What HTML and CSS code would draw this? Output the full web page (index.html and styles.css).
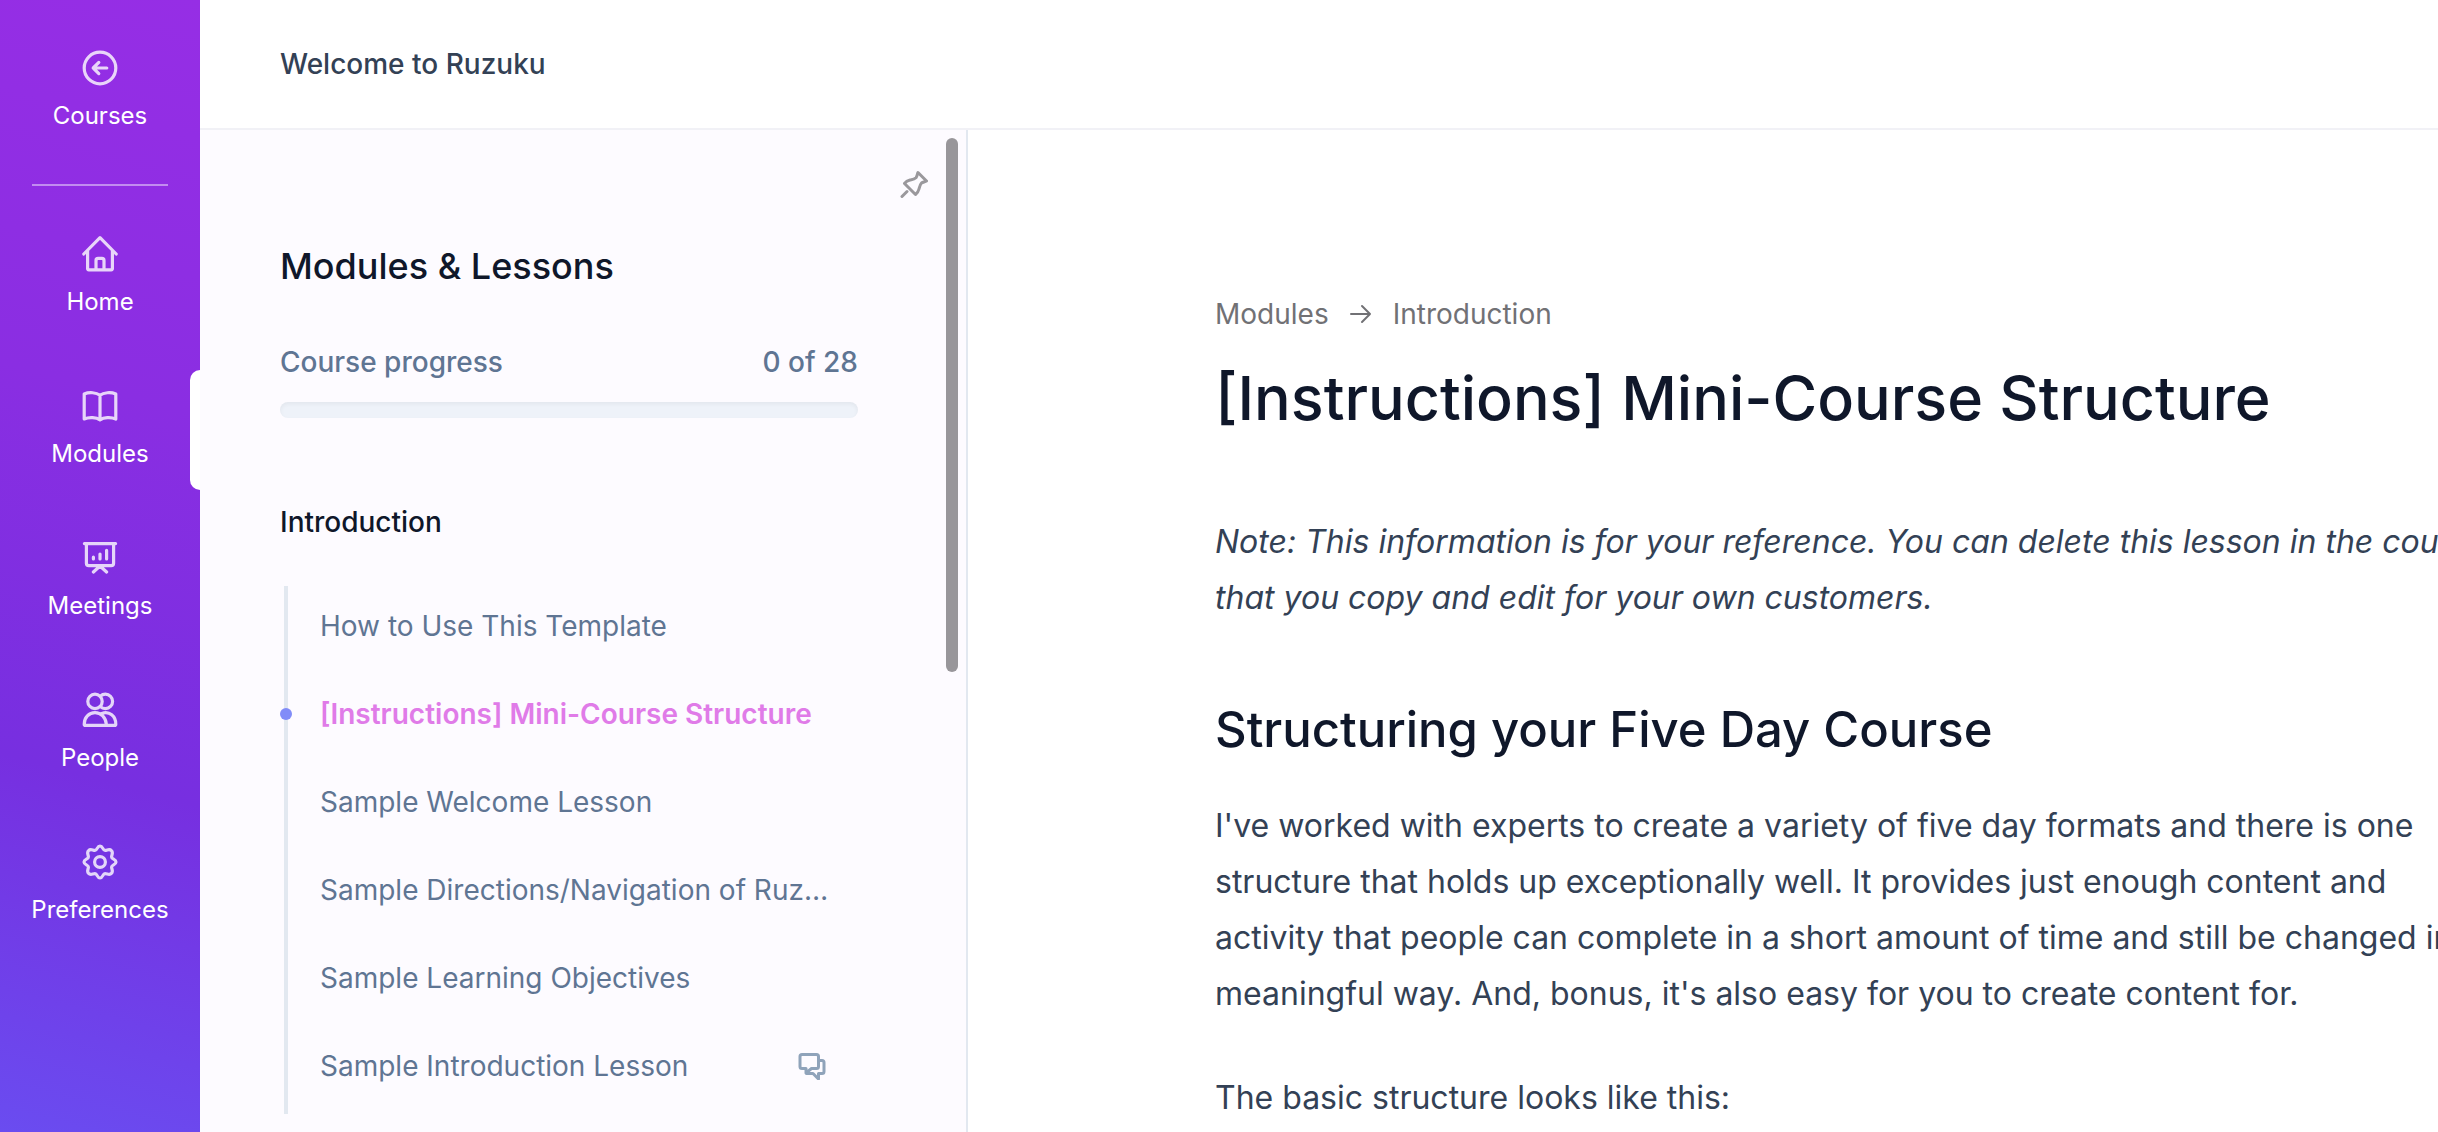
FILE: index.html
```html
<!DOCTYPE html>
<html lang="en">
<head>
    <meta charset="UTF-8">
    <meta name="viewport" content="width=device-width, initial-scale=1.0">
    <title>Welcome to Ruzuku</title>
    <link rel="stylesheet" href="styles.css">
</head>
<body>
    <div class="app">
        <nav class="sidebar">
            <a href="#" class="nav-item">
                <svg class="icon" viewBox="0 0 20 20"><circle cx="10" cy="10" r="7.9"/><path d="M13.4 10H6.6M9.4 7.2L6.6 10l2.8 2.8"/></svg>
                Courses
            </a>
            <hr class="nav-divider">
            <a href="#" class="nav-item">
                <svg class="icon" viewBox="0 0 20 20"><path d="M1.9 10L10 1.8 18.1 10M3.8 8.2v9.1c0 .4.3.6.6.6h11.2c.4 0 .6-.3.6-.6V8.2M8 17.8v-4.6c0-.6.4-1 1-1h2c.6 0 1 .4 1 1v4.6"/></svg>
                Home
            </a>
            <a href="#" class="nav-item active">
                <svg class="icon" viewBox="0 0 20 20"><path d="M10 4.6C8.2 3.2 4.6 2.9 2.1 4v12.5c2.5-1.1 6.1-.8 7.9.4 1.800-1.200 5.400-1.500 7.900-.4V4c-2.500-1.100-6.100-.8-7.900.6zM10 4.600v12.300"/></svg>
                Modules
            </a>
            <a href="#" class="nav-item">
                <svg class="icon" viewBox="0 0 20 20"><path d="M2.2 2.8h15.600M3.200 2.800v9.800c0 .7.500 1.200 1.200 1.200h11.200c.7 0 1.200-.5 1.200-1.200V2.800M10 14l-3.300 3M10 14l3.300 3M6.700 9.600v.9M10 8v2.500M13.300 6.200v4.300"/></svg>
                Meetings
            </a>
            <a href="#" class="nav-item">
                <svg class="icon" viewBox="0 0 20 20"><circle cx="7.5" cy="5.7" r="3.6"/><path d="M10.2 3.100A3.600 3.600 0 1 1 10.200 8.300M2.100 17.100c0-3.400 2.400-5.800 5.400-5.800s5.400 2.400 5.700 5.900c0 .3-.2.500-.5.500H2.700c-.4 0-.6-.2-.6-.6zM10.900 11.700c3.900-1.400 7 1.500 7 5.400 0 .4-.2.600-.6.600h-4.600"/></svg>
                People
            </a>
            <a href="#" class="nav-item">
                <svg class="icon" viewBox="0 0 20 20"><circle cx="10" cy="10" r="2.7"/><path d="M10 2C11.500 2 11.300 4.200 12.500 4.200C13.700 4.200 14.700 3.200 15.700 4.300C16.800 5.300 15.800 6.300 15.800 7.500C15.800 8.700 18 8.500 18 10C18 11.500 15.800 11.300 15.800 12.500C15.800 13.700 16.800 14.700 15.700 15.700C14.700 16.800 13.700 15.800 12.500 15.800C11.300 15.800 11.500 18 10 18C8.500 18 8.700 15.800 7.500 15.800C6.300 15.800 5.300 16.800 4.300 15.700C3.200 14.700 4.200 13.700 4.200 12.500C4.200 11.300 2 11.500 2 10C2 8.500 4.200 8.700 4.200 7.500C4.200 6.300 3.200 5.300 4.300 4.300C5.300 3.200 6.300 4.200 7.500 4.200C8.700 4.200 8.500 2 10 2z"/></svg>
                Preferences
            </a>
        </nav>

        <div class="page">
            <header class="topbar">Welcome to Ruzuku</header>

            <div class="columns">
                <aside class="outline">
                    <button class="pin-btn" aria-label="Pin panel">
                        <svg class="pin-icon" viewBox="0 0 28 28"><path d="M2 26.500l5-5M18 2.500l8.500 8.500c-1.500 1-3.500 1-5 2-1.500 1.500-2 4-2.500 6-.5 2-1.500 4-3.500 5.500L4.500 13.500c1.500-2 3.500-3 5.500-3.500 2-.4 4.500-.8 6-2.300 1.200-1.500 1.200-3.500 2-5.200z"/></svg>
                    </button>

                    <h2 class="outline-title">Modules &amp; Lessons</h2>
                    <div class="progress-label">
                        <span>Course progress</span>
                        <span>0 of 28</span>
                    </div>
                    <div class="progress-bar"></div>

                    <h3 class="module-title">Introduction</h3>
                    <ul class="lessons">
                        <li><a href="#">How to Use This Template</a></li>
                        <li class="current"><a href="#">[Instructions] Mini-Course Structure</a></li>
                        <li><a href="#">Sample Welcome Lesson</a></li>
                        <li><a href="#">Sample Directions/Navigation of Ruzuku</a></li>
                        <li><a href="#">Sample Learning Objectives</a></li>
                        <li>
                            <a href="#">Sample Introduction Lesson</a>
                            <svg class="chat-icon" viewBox="0 0 28 28"><path d="M4 2.500h14.500c1.100 0 2 .9 2 2v10c0 1.100-.9 2-2 2h-5L8 21v-4.500H4c-1.100 0-2-.9-2-2v-10c0-1.100.9-2 2-2zM21 8.500h3c1.100 0 2 .9 2 2v9c0 1.100-.9 2-2 2h-3.500V27L15 21.500H8.500"/></svg>
                        </li>
                    </ul>
                    <div class="scroll-thumb"></div>
                </aside>

                <main class="content">
                    <div class="breadcrumb">
                        <a href="#">Modules</a>
                        <svg class="arrow-icon" viewBox="0 0 24 24"><path d="M2 12h19M13 4l8 8-8 8"/></svg>
                        <a href="#">Introduction</a>
                    </div>
                    <h1>[Instructions] Mini-Course Structure</h1>
                    <p><em>Note: This information is for your reference. You can delete this lesson in the course that you copy and edit for your own customers.</em></p>
                    <h2>Structuring your Five Day Course</h2>
                    <p>I've worked with experts to create a variety of five day formats and there is one structure that holds up exceptionally well. It provides just enough content and activity that people can complete in a short amount of time and still be changed in a meaningful way. And, bonus, it's also easy for you to create content for.</p>
                    <p>The basic structure looks like this:</p>
                </main>
            </div>
        </div>
    </div>
</body>
</html>
```
FILE: styles.css
```css
* {
    margin: 0;
    padding: 0;
    box-sizing: border-box;
}

body {
    font-family: Inter, 'Liberation Sans', sans-serif;
    font-size: 28px;
    line-height: 40px;
    color: #334155;
    background: #fff;
}

a {
    color: inherit;
    text-decoration: none;
}

svg {
    fill: none;
    stroke: currentColor;
    stroke-linecap: round;
    stroke-linejoin: round;
}

.app {
    display: flex;
    height: 100vh;
    overflow: hidden;
}

/* Sidebar */
.sidebar {
    flex: none;
    width: 200px;
    padding-top: 48px;
    background: linear-gradient(195deg, #962ee5 0%, #8a2ee2 35%, #772fe0 68%, #6a4cf0 100%);
    color: #fff;
}

.nav-item {
    position: relative;
    display: flex;
    flex-direction: column;
    align-items: center;
    gap: 8px;
    margin-bottom: 64px;
    font-size: 24px;
    line-height: 40px;
}

.icon {
    width: 40px;
    height: 40px;
    stroke-width: 1.6;
    opacity: 0.8;
}

.nav-divider {
    margin: -16px 32px 48px;
    border: 0;
    border-top: 2px solid rgba(255, 255, 255, 0.45);
}

.nav-item.active::after {
    content: "";
    position: absolute;
    top: -16px;
    right: 0;
    width: 10px;
    height: 120px;
    border-radius: 12px 0 0 12px;
    background: #fff;
}

/* Page */
.page {
    flex: 1;
    min-width: 0;
    display: flex;
    flex-direction: column;
}

.topbar {
    padding: 44px 80px;
    border-bottom: 2px solid #f1f1f6;
    font-weight: 500;
}

.columns {
    flex: 1;
    min-height: 0;
    display: flex;
}

/* Lesson outline */
.outline {
    position: relative;
    flex: none;
    width: 768px;
    padding: 32px 108px 0 80px;
    border-right: 2px solid #e2e8f0;
    background: #fdfbff;
    color: #5f7593;
    overflow: hidden;
}

.pin-btn {
    display: block;
    margin: 8px -70px 48px auto;
    border: 0;
    background: none;
    color: #9a989c;
    line-height: 0;
}

.pin-icon {
    width: 28px;
    height: 28px;
    stroke-width: 3;
}

.outline-title {
    margin-bottom: 56px;
    font-size: 36px;
    font-weight: 500;
    color: #0f172a;
}

.progress-label {
    display: flex;
    justify-content: space-between;
    font-weight: 500;
}

.progress-bar {
    height: 16px;
    margin: 20px 0 84px;
    border-radius: 8px;
    background: #eef2f9;
    box-shadow: inset 0 2px 4px rgba(0, 0, 0, 0.05);
}

.module-title {
    margin-bottom: 44px;
    font-size: 28px;
    font-weight: 500;
    color: #0f172a;
}

.lessons {
    margin-left: 4px;
    padding-right: 28px;
    border-left: 4px solid #e2e8f0;
    list-style: none;
}

.lessons li {
    position: relative;
    display: flex;
    align-items: center;
    justify-content: space-between;
    padding: 20px 0 28px 32px;
}

.lessons a {
    overflow: hidden;
    white-space: nowrap;
    text-overflow: ellipsis;
}

.lessons .current {
    font-weight: 600;
    color: #e07be8;
}

.lessons .current::before {
    content: "";
    position: absolute;
    left: -8px;
    width: 12px;
    height: 12px;
    border-radius: 50%;
    background: #818cf8;
}

.chat-icon {
    flex: none;
    width: 28px;
    height: 28px;
    margin-right: 4px;
    stroke-width: 3;
    color: #8fa3ba;
}

.scroll-thumb {
    position: absolute;
    top: 8px;
    right: 8px;
    width: 12px;
    height: 534px;
    border-radius: 6px;
    background: #98969a;
}

/* Lesson content */
.content {
    flex: none;
    width: 1520px;
    padding: 164px 0 0 247px;
    font-size: 32px;
    line-height: 56px;
}

.breadcrumb {
    display: flex;
    align-items: center;
    gap: 20px;
    margin-bottom: 28px;
    font-size: 28px;
    line-height: 40px;
    color: #717175;
}

.arrow-icon {
    width: 24px;
    height: 24px;
    stroke-width: 2;
}

.content h1 {
    margin-bottom: 80px;
    font-size: 61px;
    font-weight: 500;
    line-height: 72px;
    color: #0f172a;
}

.content p {
    margin-bottom: 48px;
}

.content h2 {
    margin: 72px 0 36px;
    font-size: 49px;
    font-weight: 500;
    line-height: 64px;
    color: #0f172a;
}
```
